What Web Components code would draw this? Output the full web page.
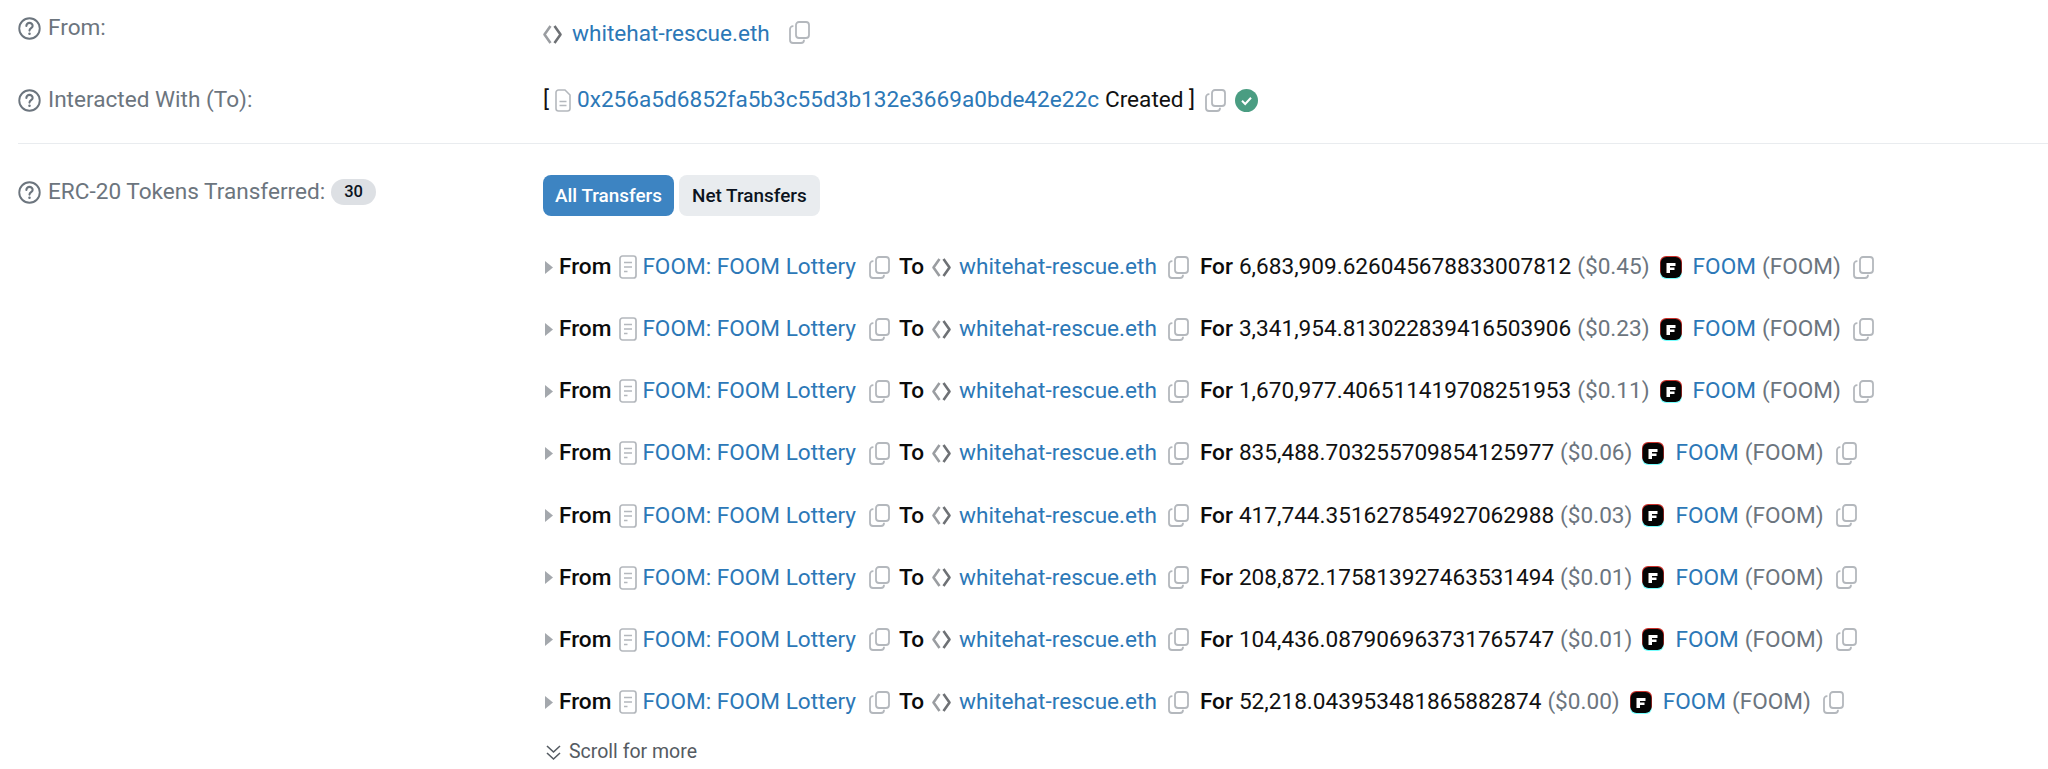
<!DOCTYPE html>
<html>
<head>
<meta charset="utf-8">
<title>Transaction details</title>
<style>
html, body { margin: 0; background: #fff; overflow: hidden; }
body { font: 22.6px/30px Roboto, "Liberation Sans", sans-serif; color: #111; height: 769px; }
</style>
</head>
<body>
<tx-details></tx-details>
<script>
const ICONS = {
	hint: `<svg width="23" height="23" viewBox="0 0 22 22" fill="none" stroke="#6c757e" stroke-width="1.8"><circle cx="11" cy="11" r="9.8"/><path d="M8 8.600a3 3 0 0 1 6 0c0 2-3 2.200-3 4.400" stroke-linecap="round" stroke-width="2"/><circle cx="11" cy="16" r=".7" fill="#6c757e" stroke-width="1"/></svg>`,
	copy: `<svg width="21" height="23" viewBox="0 0 21 23" fill="none" stroke="#b4b8bd" stroke-width="1.8"><rect x="7" y="1" width="13" height="16" rx="3"/><path d="M4.400 5.200H4a3 3 0 0 0-3 3V19a3 3 0 0 0 3 3h8a3 3 0 0 0 3-3v-.2"/></svg>`,
	ens: `<svg width="19" height="19" viewBox="0 0 19 19" fill="none" stroke-width="2.6" stroke-linejoin="round"><path d="M7.500 1 1.500 9.500l6 8.500" stroke="#9a9da1"/><path d="M11.500 1l6 8.500-6 8.500" stroke="#6e7175"/></svg>`,
	lines: `<svg width="18" height="24" viewBox="0 0 18 24" fill="none" stroke="#b4b8bd" stroke-width="1.700"><rect x="1" y="1" width="16" height="22" rx="2.500"/><path d="M5 7.500h8M5 12h8M5 16.500h3.500"/></svg>`,
	file: `<svg width="16" height="23" viewBox="0 0 16 23" fill="none" stroke="#b4b8bd" stroke-width="1.600"><path d="M3.500 1H10l5 5v13.500a2.500 2.500 0 0 1-2.500 2.500h-9A2.500 2.500 0 0 1 1 19.500v-16A2.500 2.500 0 0 1 3.500 1z"/><path d="M4.500 12.500h7M4.500 16.500h7"/></svg>`,
	check: `<svg width="23" height="23" viewBox="0 0 23 23"><circle cx="11.500" cy="11.500" r="11.500" fill="#4a9d82"/><path d="M7 11.800l3.200 3.200L16 8.800" fill="none" stroke="#fff" stroke-width="2"/></svg>`,
	caret: `<svg width="8" height="13" viewBox="0 0 8 13"><path d="M0 0l8 6.500L0 13z" fill="#a4a8ad"/></svg>`,
	scroll: `<svg width="17" height="17" viewBox="0 0 17 17" fill="none" stroke="#555b62" stroke-width="1.600"><path d="M2 2l6.500 6L15 2M2 9l6.500 6L15 9"/></svg>`,
	foom: `<svg width="22" height="23" viewBox="0 0 22 23"><rect y="2" width="22" height="21" rx="6" fill="#7ff"/><rect width="22" height="21" rx="6" fill="#c9302a"/><rect x=".6" y="1" width="20.800" height="21" rx="6" fill="#050505"/><path d="M6.500 7h9v3H10v1.500h4.500V14H10v3H6.500z" fill="#fff"/></svg>`
};

class TxIcon extends HTMLElement {
	constructor() { super();
		this.attachShadow({mode: 'open'});
	}
	connectedCallback() {
		this.shadowRoot.innerHTML = `<style>:host{display:inline-flex;flex:none;align-items:center}svg{display:block}</style>${ICONS[this.getAttribute('name')]}`;
	}
}
customElements.define('tx-icon', TxIcon);

let rowTemplate = document.createElement('template');
rowTemplate.innerHTML = `
<style>
:host { display: grid; grid-template-columns: 525px 1fr; padding-left: 18px; }
#label { display: flex; align-items: center; align-self: start; gap: 7px; color: #6c757e; height: 30px; }
#value { min-width: 0; }
</style>
<div id="label"><tx-icon name="hint"></tx-icon><span><slot name="label"></slot></span><slot name="badge"></slot></div>
<div id="value"><slot></slot></div>`;

class TxRow extends HTMLElement {
	constructor() { super();
		const shadowRoot = this.attachShadow({mode: 'open'});
		shadowRoot.appendChild(rowTemplate.content.cloneNode(true));
	}
}
customElements.define('tx-row', TxRow);

let tabsTemplate = document.createElement('template');
tabsTemplate.innerHTML = `
<style>
:host { display: flex; gap: 5px; font-size: 18.9px; font-weight: 500; }
span { display: block; height: 41px; line-height: 41px; padding: 0 13px; border-radius: 8px; background: #e9ecef; color: #0c1320; }
.on { background: #3d84c2; color: #fff; padding: 0 12px; }
</style>
<span class="on">All Transfers</span><span>Net Transfers</span>`;

class TxTabs extends HTMLElement {
	constructor() { super();
		this.attachShadow({mode: 'open'}).appendChild(tabsTemplate.content.cloneNode(true));
	}
}
customElements.define('tx-tabs', TxTabs);

let transferTemplate = document.createElement('template');
transferTemplate.innerHTML = `
<style>
:host { display: flex; align-items: center; height: 62.15px; white-space: nowrap; padding-left: 2px; }
b { font-weight: 500; color: #0b0b0b; }
a { color: #2c78b7; text-decoration: none; }
.muted { color: #6c757e; }
</style>
<tx-icon name="caret"></tx-icon>
<b style="margin-left:6px">From</b>
<tx-icon name="lines" style="margin-left:8px"></tx-icon>
<a style="margin-left:5px">FOOM: FOOM Lottery</a>
<tx-icon name="copy" style="margin-left:13px"></tx-icon>
<b style="margin-left:9px">To</b>
<tx-icon name="ens" style="margin-left:8px"></tx-icon>
<a style="margin-left:8px">whitehat-rescue.eth</a>
<tx-icon name="copy" style="margin-left:11px"></tx-icon>
<b style="margin-left:11px">For</b>
<span id="amount" style="margin-left:6px"></span>
<span id="usd" class="muted" style="margin-left:6px"></span>
<tx-icon name="foom" style="margin-left:10px"></tx-icon>
<a style="margin-left:11px">FOOM</a>
<span class="muted" style="margin-left:6px">(FOOM)</span>
<tx-icon name="copy" style="margin-left:12px"></tx-icon>`;

class TxTransfer extends HTMLElement {
	constructor() { super();
		this.attachShadow({mode: 'open'}).appendChild(transferTemplate.content.cloneNode(true));
	}
	connectedCallback() {
		this.shadowRoot.querySelector('#amount').textContent = this.getAttribute('amount');
		this.shadowRoot.querySelector('#usd').textContent = this.getAttribute('usd');
	}
}
customElements.define('tx-transfer', TxTransfer);

let detailsTemplate = document.createElement('template');
detailsTemplate.innerHTML = `
<style>
:host { display: block; }
a { color: #2c78b7; text-decoration: none; }
.line { display: flex; align-items: center; white-space: nowrap; }
hr { border: 0; height: 1px; background: #e9ecef; margin: 0 0 0 18px; }
.badge { font-size: 16.5px; font-weight: 500; line-height: 26px; height: 26px; padding: 0 13px; border-radius: 13px; background: #dde0e4; color: #0c1320; margin-left: -1px; }
.more { display: flex; align-items: center; gap: 7px; color: #555b62; font-size: 19.5px; height: 30px; padding-left: 2px; margin-top: 4px; }
tx-tabs { margin: 0 0 20px 0; width: max-content; }
</style>
<tx-row style="padding-top:13px">
	<span slot="label">From:</span>
	<div class="line" style="margin-top:6px">
		<tx-icon name="ens"></tx-icon>
		<a style="margin-left:10px">whitehat-rescue.eth</a>
		<tx-icon name="copy" style="margin-left:19px;margin-top:-4px"></tx-icon>
	</div>
</tx-row>
<tx-row style="padding-top:36px">
	<span slot="label">Interacted With (To):</span>
	<div class="line">
		<span>[</span>
		<tx-icon name="file" style="margin-left:6px"></tx-icon>
		<a style="margin-left:6px">0x256a5d6852fa5b3c55d3b132e3669a0bde42e22c</a>
		<span style="margin-left:6px">Created ]</span>
		<tx-icon name="copy" style="margin-left:10px"></tx-icon>
		<tx-icon name="check" style="margin-left:9px"></tx-icon>
	</div>
</tx-row>
<hr style="margin-top:28px">
<tx-row style="padding-top:33px">
	<span slot="label">ERC-20 Tokens Transferred:</span>
	<span slot="badge" class="badge">30</span>
	<div style="margin-top:-2px">
		<tx-tabs></tx-tabs>
		<tx-transfer amount="6,683,909.626045678833007812" usd="($0.45)"></tx-transfer>
		<tx-transfer amount="3,341,954.813022839416503906" usd="($0.23)"></tx-transfer>
		<tx-transfer amount="1,670,977.406511419708251953" usd="($0.11)"></tx-transfer>
		<tx-transfer amount="835,488.703255709854125977" usd="($0.06)"></tx-transfer>
		<tx-transfer amount="417,744.351627854927062988" usd="($0.03)"></tx-transfer>
		<tx-transfer amount="208,872.175813927463531494" usd="($0.01)"></tx-transfer>
		<tx-transfer amount="104,436.087906963731765747" usd="($0.01)"></tx-transfer>
		<tx-transfer amount="52,218.043953481865882874" usd="($0.00)"></tx-transfer>
		<div class="more"><tx-icon name="scroll"></tx-icon>Scroll for more</div>
	</div>
</tx-row>`;

class TxDetails extends HTMLElement {
	constructor() { super();
		this.attachShadow({mode: 'open'}).appendChild(detailsTemplate.content.cloneNode(true));
	}
}
customElements.define('tx-details', TxDetails);
</script>
</body>
</html>
